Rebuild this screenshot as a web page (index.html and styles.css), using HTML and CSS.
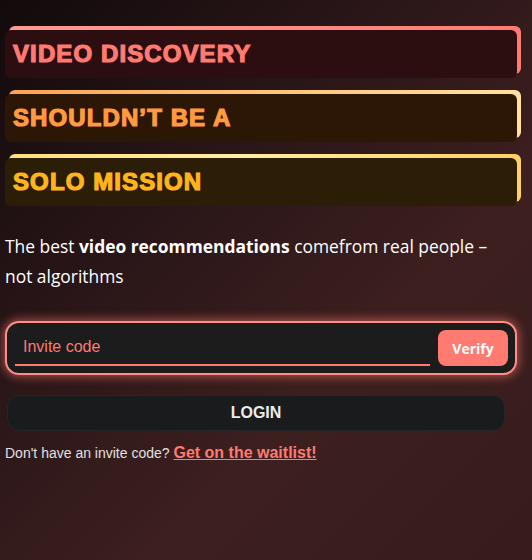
FILE: index.html
```html
<!DOCTYPE html>
<html lang="en">
<head>
<meta charset="utf-8">
<title>Invite</title>
<link rel="stylesheet" href="styles.css">
</head>
<body>
<main class="page">
  <div class="banners">
    <div class="banner banner-red"><div class="banner-inner"><span>VIDEO DISCOVERY</span></div></div>
    <div class="banner banner-orange"><div class="banner-inner"><span>SHOULDN’T BE A</span></div></div>
    <div class="banner banner-yellow"><div class="banner-inner"><span>SOLO MISSION</span></div></div>
  </div>
  <p class="lead">The best <strong>video recommendations</strong> comefrom real people – not algorithms</p>
  <form class="invite">
    <input class="invite-input" type="text" placeholder="Invite code">
    <button class="verify" type="button">Verify</button>
  </form>
  <button class="login" type="button">LOGIN</button>
  <p class="footer">Don't have an invite code? <a href="#" class="waitlist">Get on the waitlist!</a></p>
</main>
</body>
</html>
```

FILE: styles.css
```css
html, body {
  margin: 0;
  height: 100%;
}
body {
  background: linear-gradient(135deg, #120a0b 0%, #2a1618 35%, #3d1f1f 65%, #371c1c 100%);
  font-family: "Liberation Sans", Arial, sans-serif;
  color: #fff;
}
.page {
  width: 512px;
  margin-left: 5px;
  padding-top: 30px;
}
.banners {
  display: flex;
  flex-direction: column;
  gap: 16px;
}
.banner {
  position: relative;
  height: 48px;
}
.banner::before {
  content: "";
  position: absolute;
  inset: 0;
  transform: translate(4px, -4px);
  border-radius: 6px;
}
.banner-inner {
  position: relative;
  height: 100%;
  border-radius: 6px;
  display: flex;
  align-items: center;
  padding-left: 8px;
  font-weight: 700;
  font-size: 24px;
  letter-spacing: 1.1px;
  -webkit-text-stroke: 1.2px currentColor;
}
.banner-red::before { background: linear-gradient(90deg, #ff9c92, #ff7b72); }
.banner-red .banner-inner { background: #2c0e10; color: #ff7a70; }
.banner-orange::before { background: linear-gradient(90deg, #ffa458, #ffe29c); }
.banner-orange .banner-inner { background: #2c1606; color: #ff9a40; }
.banner-yellow::before { background: linear-gradient(90deg, #ffe07a, #ffeea0 45%, #ffd060); }
.banner-yellow .banner-inner { background: #2b1d06; color: #ffb41c; }

.lead {
  margin: 25px 0 0;
  font-family: "Open Sans", sans-serif;
  font-size: 17.4px;
  line-height: 30px;
  color: #fff;
  width: 510px;
}
.lead strong { font-weight: 700; }

.invite {
  margin: 30px 0 0;
  display: flex;
  align-items: center;
  gap: 8px;
  padding: 7px 7px 7px 8px;
  border: 2px solid #ff8e86;
  border-radius: 14px;
  background: #1c1c1c;
  box-shadow: 0 0 10px 2px rgba(255, 120, 110, 0.55);
  box-sizing: border-box;
  width: 512px;
}
.invite-input {
  flex: 1;
  height: 36px;
  box-sizing: border-box;
  border: 0;
  border-bottom: 2px solid #ff7a70;
  background: transparent;
  padding: 0 0 0 8px;
  font-family: "Liberation Sans", Arial, sans-serif;
  font-size: 16px;
  color: #ff7a70;
  outline: none;
}
.invite-input::placeholder { color: #ff7a70; }
.verify {
  width: 70px;
  height: 36px;
  border: 0;
  border-radius: 8px;
  background: #ff7b72;
  color: #fff;
  font-family: "Open Sans", sans-serif;
  font-weight: 700;
  font-size: 14px;
}
.login {
  display: block;
  margin: 20px 0 0 2px;
  width: 498px;
  height: 36px;
  border: 1px solid #24262a;
  border-radius: 12px;
  background: #1a1b1d;
  color: #ececec;
  font-family: "Liberation Sans", Arial, sans-serif;
  font-weight: 700;
  font-size: 16px;
}
.footer {
  margin: 13px 0 0;
  font-size: 14px;
  color: #e0e0e0;
}
.waitlist {
  color: #ff7a70;
  font-weight: 700;
  font-size: 16px;
}
```
